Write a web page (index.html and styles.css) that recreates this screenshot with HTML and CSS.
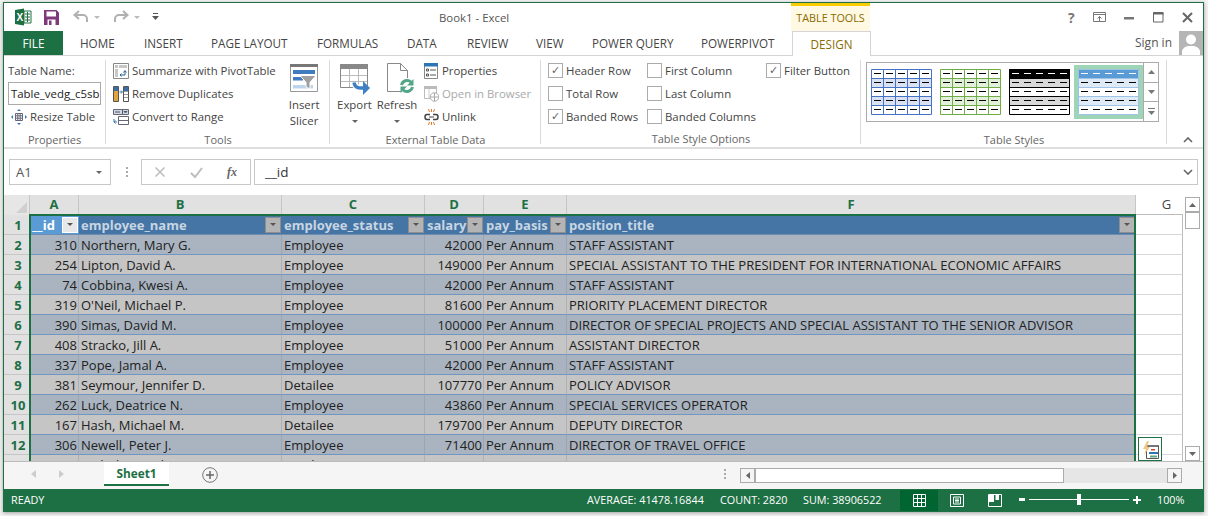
FILE: index.html
```html
<!DOCTYPE html>
<html>
<head>
<meta charset="utf-8">
<title>Book1 - Excel</title>
<link rel="stylesheet" href="styles.css">
</head>
<body>
<div class="window">
  <div class="titlebar">
    <div class="qat">
      <svg class="xl" width="18" height="18" viewBox="0 0 18 18"><path d="M10 3h7v12h-7z" fill="#fff" stroke="#1d7044"/><path d="M11 6h5M11 9h5M11 12h5M13.500 4v10" stroke="#1d7044"/><path d="M1 2l9-1.500v17L1 16z" fill="#1d7044"/><text x="2.600" y="13" class="xl-x">X</text></svg>
      <svg class="save" width="15" height="15" viewBox="0 0 15 15"><path d="M0 0h12.500L15 2.500V15H0z" fill="#80397b"/><path d="M2.500 1.500h9.500v5h-9.500z" fill="#fff"/><path d="M3.500 9.500h8V15h-8z" fill="#fff"/><path d="M5 10.500h2.500V15H5z" fill="#80397b"/></svg>
      <svg class="undo" width="16" height="14" viewBox="0 0 16 14"><path d="M6 1L1.500 5 6 9M2 5h8a4 4 0 0 1 4 4v3" fill="none" stroke="#b0b0b0" stroke-width="2"/></svg>
      <i class="mini-caret"></i>
      <svg class="redo" width="16" height="14" viewBox="0 0 16 14"><path d="M10 1l4.500 4L10 9M14 5H6a4 4 0 0 0-4 4v3" fill="none" stroke="#b0b0b0" stroke-width="2"/></svg>
      <i class="mini-caret"></i>
      <svg class="custom" width="7" height="8" viewBox="0 0 7 8"><path d="M1 .500h5" stroke="#555"/><path d="M0 3h7L3.500 7z" fill="#555"/></svg>
    </div>
    <div class="doc-title">Book1 - Excel</div>
    <div class="tool-head">TABLE TOOLS</div>
    <div class="win-controls">
      <span class="help">?</span>
      <svg class="c-restore" width="13" height="10" viewBox="0 0 13 10"><path d="M.5.500h12v9H.5z" fill="none" stroke="#777"/><path d="M1 2.500h11" stroke="#777"/><path d="M6.500 9V4.500M4.500 6.500l2-2 2 2" fill="none" stroke="#777"/></svg>
      <svg class="c-min" width="10" height="3" viewBox="0 0 10 3"><path d="M0 0h10v2.500H0z" fill="#777"/></svg>
      <svg class="c-max" width="11" height="11" viewBox="0 0 11 11"><path d="M.5.500h9.500v9.500H.5z" fill="none" stroke="#666"/><path d="M0 1.500h10.500" stroke="#666" stroke-width="2"/></svg>
      <svg class="c-close" width="11" height="11" viewBox="0 0 11 11"><path d="M1 1l9 9M10 1l-9 9" stroke="#666" stroke-width="2"/></svg>
    </div>
  </div>

  <div class="tabs">
    <div class="tab file">FILE</div>
    <div class="tab t-home">HOME</div>
    <div class="tab t-insert">INSERT</div>
    <div class="tab t-layout">PAGE LAYOUT</div>
    <div class="tab t-formulas">FORMULAS</div>
    <div class="tab t-data">DATA</div>
    <div class="tab t-review">REVIEW</div>
    <div class="tab t-view">VIEW</div>
    <div class="tab t-pq">POWER QUERY</div>
    <div class="tab t-pp">POWERPIVOT</div>
    <div class="tab design">DESIGN</div>
    <div class="signin">
      <span>Sign in</span>
      <svg width="24" height="24" viewBox="0 0 24 24"><path d="M0 0h24v24H0z" fill="#b5b5b5"/><circle cx="12" cy="8.500" r="5" fill="#fff"/><path d="M3 24v-4q1-4 6-5h6q5 1 6 5v4z" fill="#fff"/></svg>
    </div>
  </div>

  <div class="ribbon">
    <section class="group g-props">
      <div class="g-body">
        <div class="rl">Table Name:</div>
        <div class="name-input">Table_vedg_c5sb</div>
        <div class="rl resize">
          <svg width="16" height="16" viewBox="0 0 16 16"><path d="M4.500 4.500h7v7h-7zM4.500 6.800h7M4.500 9.200h7M6.800 4.500v7M9.200 4.500v7" fill="none" stroke="#667"/><path d="M8 0l2 2H6zM8 16l-2-2h4zM0 8l2-2v4zM16 8l-2 2V6z" fill="#3a76b8"/></svg>
          <span>Resize Table</span>
        </div>
      </div>
      <div class="g-label">Properties</div>
    </section>

    <section class="group g-tools">
      <div class="g-body tools-body">
        <div class="cmd-list">
          <div class="cmd">
            <svg width="16" height="16" viewBox="0 0 16 16"><path d="M.5.500h15v15H.5z" fill="#fff" stroke="#888"/><path d="M2 2h3v3H2zM6 2h8v3H6zM2 6h3v8H2z" fill="#c8c8c8"/><path d="M7 12h5V8M10.500 9.500l1.500-2 1.500 2M8.500 10.500L7 12l1.500 1.500" fill="none" stroke="#2a5f9e"/></svg>
            <span>Summarize with PivotTable</span>
          </div>
          <div class="cmd">
            <svg width="16" height="16" viewBox="0 0 16 16"><path d="M.5.500h5v15h-5zM10.500.500h5v15h-5z" fill="#fff" stroke="#555"/><path d="M1 1h4v4H1zM11 1h4v4h-4z" fill="#3a6ea5"/><path d="M1 5h4v5H1zM1 10h4v5H1z" fill="#e0a63c"/><path d="M11 5.500h4M11 8.500h4M11 11.500h4" stroke="#999"/><path d="M6.500 6H9M8 4.500L9.500 6 8 7.500" fill="none" stroke="#3a76b8"/></svg>
            <span>Remove Duplicates</span>
          </div>
          <div class="cmd">
            <svg width="16" height="16" viewBox="0 0 16 16"><path d="M.5.500h15v5H.5z" fill="#cfd9e6" stroke="#667"/><path d="M9.500 1v4M11 2.500h3L12.500 4zM2 3h5" stroke="#556" fill="none"/><path d="M5.500 7.500h10v8h-10z" fill="#fff" stroke="#667"/><path d="M6 11.500h9" stroke="#667"/><path d="M1 10v3h3M2.500 11.500L1 13l1.500 1.500" fill="none" stroke="#3a76b8"/></svg>
            <span>Convert to Range</span>
          </div>
        </div>
        <div class="big slicer">
          <svg width="28" height="28" viewBox="0 0 28 28"><path d="M.5.500h27v27H.5z" fill="#fff" stroke="#999"/><path d="M0 0h28v3H0z" fill="#777"/><path d="M3 6h22v4H3z" fill="#3f7cbf"/><path d="M3 13h10v3.500H3z" fill="#3f7cbf"/><path d="M3 21h20v3.500H3z" fill="#bcd5ec"/><path d="M10 11.500h16l-6 7V25l-4-2v-4.500z" fill="#a0a0a0" stroke="#fff"/></svg>
          <span>Insert</span>
          <span>Slicer</span>
        </div>
      </div>
      <div class="g-label">Tools</div>
    </section>

    <section class="group g-ext">
      <div class="g-body ext-body">
        <div class="big export">
          <svg width="30" height="31" viewBox="0 0 30 31"><path d="M.5.500h27v23H.5z" fill="#fff" stroke="#888"/><path d="M0 0h28v5H0z" fill="#888"/><path d="M1 11.500h26M1 17.500h26M9.500 5v18M18.500 5v18" stroke="#bbb"/><path d="M14 18.500q1 5.500 6 5.500h4" fill="none" stroke="#fff" stroke-width="6"/><path d="M14 18.500q1 5.500 6 5.500h4" fill="none" stroke="#3f80c4" stroke-width="3.500"/><path d="M23 17l7 7-7 7z" fill="#3f80c4"/></svg>
          <span>Export</span>
          <i class="caret"></i>
        </div>
        <div class="big refresh">
          <svg width="28" height="31" viewBox="0 0 28 31"><path d="M.5.500h13l7 7v21H.5z" fill="#fff" stroke="#888"/><path d="M13.500.500v7h7" fill="none" stroke="#888"/><circle cx="20" cy="23" r="8" fill="#fff"/><path d="M14.500 22a5.800 5.800 0 0 1 9.500-3" fill="none" stroke="#53a588" stroke-width="3"/><path d="M26.500 16v6.500H20z" fill="#53a588"/><path d="M25.500 24a5.800 5.800 0 0 1-9.500 3" fill="none" stroke="#53a588" stroke-width="3"/><path d="M13.500 30v-6.500H20z" fill="#53a588"/></svg>
          <span>Refresh</span>
          <i class="caret"></i>
        </div>
        <div class="cmd-list">
          <div class="cmd">
            <svg width="15" height="16" viewBox="0 0 15 16"><path d="M.5.500h13v15H.5z" fill="#fff" stroke="#888"/><path d="M0 0h14v3.500H0z" fill="#2e75b6"/><path d="M2.500 6h2v2h-2zM2.500 11h2v2h-2z" fill="none" stroke="#555"/><path d="M6 7h6M6 12h6" stroke="#555"/></svg>
            <span>Properties</span>
          </div>
          <div class="cmd off">
            <svg width="15" height="16" viewBox="0 0 15 16"><path d="M.5.500h12v12H.5z" fill="#fff" stroke="#bbb"/><path d="M0 0h13v3H0z" fill="#bbb"/><path d="M5 3v9" stroke="#ccc"/><circle cx="10.500" cy="11" r="4.300" fill="#fff" stroke="#aaa"/><path d="M6.500 11h8M10.500 7v8" stroke="#aaa"/></svg>
            <span>Open in Browser</span>
          </div>
          <div class="cmd">
            <svg width="15" height="16" viewBox="0 0 15 16"><path d="M6 5.500H3q-2 0-2 2.500t2 2.500h3M9 5.500h3q2 0 2 2.500t-2 2.500H9" fill="none" stroke="#444" stroke-width="1.500"/><path d="M5 8h5" stroke="#444"/><path d="M4.500 0l1 3M7.500 0v3M10.500 0l-1 3M4.500 16l1-3M7.500 16v-3M10.500 16l-1-3" stroke="#e8792b"/></svg>
            <span>Unlink</span>
          </div>
        </div>
      </div>
      <div class="g-label">External Table Data</div>
    </section>

    <section class="group g-opts">
      <div class="g-body opts-body">
        <label class="chk on">Header Row</label>
        <label class="chk">First Column</label>
        <label class="chk on">Filter Button</label>
        <label class="chk">Total Row</label>
        <label class="chk">Last Column</label>
        <span></span>
        <label class="chk on">Banded Rows</label>
        <label class="chk">Banded Columns</label>
        <span></span>
      </div>
      <div class="g-label">Table Style Options</div>
    </section>

    <section class="group g-styles">
      <div class="g-body styles-body">
        <div class="gallery">
          <svg class="swatch" width="61" height="46" viewBox="0 0 61 46"><path d="M0 0h61v46H0z" fill="#fff"/><path d="M0 9h61v9H0zM0 27h61v9H0z" fill="#d9e1f2"/><path d="M.5.500h60v45H.5zM.5 9.500h60M.5 18.500h60M.5 27.500h60M.5 36.500h60M12.500 0v46M24.500 0v46M36.500 0v46M48.500 0v46" fill="none" stroke="#4472c4"/><path d="M3 4.500h56M3 13.500h56M3 22.500h56M3 31.500h56M3 40.500h56" stroke="#000" stroke-dasharray="7 5"/></svg>
          <svg class="swatch" width="61" height="46" viewBox="0 0 61 46"><path d="M0 0h61v46H0z" fill="#fff"/><path d="M0 9h61v9H0zM0 27h61v9H0z" fill="#e2efda"/><path d="M.5.500h60v45H.5zM.5 9.500h60M.5 18.500h60M.5 27.500h60M.5 36.500h60M12.500 0v46M24.500 0v46M36.500 0v46M48.500 0v46" fill="none" stroke="#70ad47"/><path d="M3 4.500h56M3 13.500h56M3 22.500h56M3 31.500h56M3 40.500h56" stroke="#000" stroke-dasharray="7 5"/></svg>
          <svg class="swatch" width="61" height="46" viewBox="0 0 61 46"><path d="M0 0h61v46H0z" fill="#fff"/><path d="M0 9h61v9H0zM0 27h61v9H0z" fill="#d9d9d9"/><path d="M0 0h61v9H0z"/><path d="M.5.500h60v45H.5zM.5 9.500h60M.5 18.500h60M.5 27.500h60M.5 36.500h60" fill="none" stroke="#000"/><path d="M3 4.500h56" stroke="#fff" stroke-dasharray="7 5"/><path d="M3 13.500h56M3 22.500h56M3 31.500h56M3 40.500h56" stroke="#000" stroke-dasharray="7 5"/></svg>
          <div class="swatch-hl"><svg class="swatch" width="61" height="46" viewBox="0 0 61 46"><path d="M0 0h61v46H0z" fill="#fff"/><path d="M0 9h61v9H0zM0 27h61v9H0z" fill="#deeaf6"/><path d="M0 0h61v9H0z" fill="#5b9bd5"/><path d="M.5.500h60v45H.5zM.5 9.500h60M.5 18.500h60M.5 27.500h60M.5 36.500h60" fill="none" stroke="#9dc3e6"/><path d="M3 4.500h56" stroke="#fff" stroke-dasharray="7 5"/><path d="M3 13.500h56M3 22.500h56M3 31.500h56M3 40.500h56" stroke="#000" stroke-dasharray="7 5"/></svg></div>
        </div>
        <div class="gal-scroll">
          <div><svg width="7" height="4" viewBox="0 0 7 4"><path d="M3.500 0L7 4H0z" fill="#777"/></svg></div>
          <div><svg width="7" height="4" viewBox="0 0 7 4"><path d="M0 0h7L3.500 4z" fill="#777"/></svg></div>
          <div><svg width="7" height="7" viewBox="0 0 7 7"><path d="M0 .500h7" stroke="#777"/><path d="M0 3h7L3.500 7z" fill="#777"/></svg></div>
        </div>
      </div>
      <div class="g-label">Table Styles</div>
    </section>
    <svg class="collapse" width="10" height="6" viewBox="0 0 10 6"><path d="M1 5l4-4 4 4" fill="none" stroke="#666" stroke-width="1.600"/></svg>
  </div>

  <div class="formula-bar">
    <div class="namebox"><span>A1</span><i class="fb-caret"></i></div>
    <div class="fb-grip"></div>
    <div class="fb-buttons">
      <svg width="10" height="10" viewBox="0 0 10 10"><path d="M.5.500l9 9M9.500.500l-9 9" stroke="#bdbdbd" stroke-width="1.500"/></svg>
      <svg width="13" height="11" viewBox="0 0 13 11"><path d="M1 6l4 4 7-9" fill="none" stroke="#bdbdbd" stroke-width="2"/></svg>
      <span class="fx">fx</span>
    </div>
    <div class="fb-input"><span>__id</span><svg width="10" height="6" viewBox="0 0 10 6"><path d="M1 1l4 4 4-4" fill="none" stroke="#666" stroke-width="1.600"/></svg></div>
  </div>

  <div class="sheet-area">
    <div class="grid-wrap">
      <div class="grid">
        <div class="corner"></div><div class="ch sel">A</div><div class="ch sel">B</div><div class="ch sel">C</div><div class="ch sel">D</div><div class="ch sel">E</div><div class="ch sel">F</div><div class="ch g">G</div>

        <div class="rh">1</div><div class="th active"><b>__id</b><i class="flt lit"></i></div><div class="th"><b>employee_name</b><i class="flt"></i></div><div class="th"><b>employee_status</b><i class="flt"></i></div><div class="th"><b>salary</b><i class="flt"></i></div><div class="th"><b>pay_basis</b><i class="flt"></i></div><div class="th"><b>position_title</b><i class="flt"></i></div><div class="blank"></div>

        <div class="rh">2</div><div class="td a num">310</div><div class="td a">Northern, Mary G.</div><div class="td a">Employee</div><div class="td a num">42000</div><div class="td a">Per Annum</div><div class="td a">STAFF ASSISTANT</div><div class="blank"></div>
        <div class="rh">3</div><div class="td b num">254</div><div class="td b">Lipton, David A.</div><div class="td b">Employee</div><div class="td b num">149000</div><div class="td b">Per Annum</div><div class="td b">SPECIAL ASSISTANT TO THE PRESIDENT FOR INTERNATIONAL ECONOMIC AFFAIRS</div><div class="blank"></div>
        <div class="rh">4</div><div class="td a num">74</div><div class="td a">Cobbina, Kwesi A.</div><div class="td a">Employee</div><div class="td a num">42000</div><div class="td a">Per Annum</div><div class="td a">STAFF ASSISTANT</div><div class="blank"></div>
        <div class="rh">5</div><div class="td b num">319</div><div class="td b">O'Neil, Michael P.</div><div class="td b">Employee</div><div class="td b num">81600</div><div class="td b">Per Annum</div><div class="td b">PRIORITY PLACEMENT DIRECTOR</div><div class="blank"></div>
        <div class="rh">6</div><div class="td a num">390</div><div class="td a">Simas, David M.</div><div class="td a">Employee</div><div class="td a num">100000</div><div class="td a">Per Annum</div><div class="td a">DIRECTOR OF SPECIAL PROJECTS AND SPECIAL ASSISTANT TO THE SENIOR ADVISOR</div><div class="blank"></div>
        <div class="rh">7</div><div class="td b num">408</div><div class="td b">Stracko, Jill A.</div><div class="td b">Employee</div><div class="td b num">51000</div><div class="td b">Per Annum</div><div class="td b">ASSISTANT DIRECTOR</div><div class="blank"></div>
        <div class="rh">8</div><div class="td a num">337</div><div class="td a">Pope, Jamal A.</div><div class="td a">Employee</div><div class="td a num">42000</div><div class="td a">Per Annum</div><div class="td a">STAFF ASSISTANT</div><div class="blank"></div>
        <div class="rh">9</div><div class="td b num">381</div><div class="td b">Seymour, Jennifer D.</div><div class="td b">Detailee</div><div class="td b num">107770</div><div class="td b">Per Annum</div><div class="td b">POLICY ADVISOR</div><div class="blank"></div>
        <div class="rh">10</div><div class="td a num">262</div><div class="td a">Luck, Deatrice N.</div><div class="td a">Employee</div><div class="td a num">43860</div><div class="td a">Per Annum</div><div class="td a">SPECIAL SERVICES OPERATOR</div><div class="blank"></div>
        <div class="rh">11</div><div class="td b num">167</div><div class="td b">Hash, Michael M.</div><div class="td b">Detailee</div><div class="td b num">179700</div><div class="td b">Per Annum</div><div class="td b">DEPUTY DIRECTOR</div><div class="blank"></div>
        <div class="rh">12</div><div class="td a num">306</div><div class="td a">Newell, Peter J.</div><div class="td a">Employee</div><div class="td a num">71400</div><div class="td a">Per Annum</div><div class="td a">DIRECTOR OF TRAVEL OFFICE</div><div class="blank"></div>
        <div class="rh">13</div><div class="td b num">255</div><div class="td b">Nichols, Carol</div><div class="td b">Employee</div><div class="td b num">62000</div><div class="td b">Per Annum</div><div class="td b">STAFF ASSISTANT</div><div class="blank"></div>
      </div>
      <div class="selection"></div>
      <div class="quick">
        <svg width="18" height="18" viewBox="0 0 18 18"><path d="M4.500 4.500h12v13h-12z" fill="#fff" stroke="#555"/><path d="M5 4h11v2H5z" fill="#777"/><path d="M9 8h4v1.500H9z" fill="#d9432f"/><path d="M7 11h9v2H7z" fill="#2e75b6"/><path d="M8 14.500h7v2H8z" fill="#5fa58a"/><path d="M5 0L1 8h3l-2 6 6-8H5l2-6z" fill="#f0c987"/></svg>
      </div>
    </div>
    <div class="vscroll">
      <div class="sb-btn"><svg width="7" height="4" viewBox="0 0 7 4"><path d="M3.500 0L7 4H0z" fill="#666"/></svg></div>
      <div class="sb-thumb"></div>
      <div class="sb-track"></div>
      <div class="sb-btn"><svg width="7" height="4" viewBox="0 0 7 4"><path d="M0 0h7L3.500 4z" fill="#666"/></svg></div>
    </div>
  </div>

  <div class="sheet-tabs">
    <svg class="nav-l" width="5" height="8" viewBox="0 0 5 8"><path d="M5 0v8L0 4z" fill="#ccc"/></svg>
    <svg class="nav-r" width="5" height="8" viewBox="0 0 5 8"><path d="M0 0v8l5-4z" fill="#ccc"/></svg>
    <div class="sheet-tab">Sheet1</div>
    <svg class="add" width="16" height="16" viewBox="0 0 16 16"><circle cx="8" cy="8" r="7.300" fill="none" stroke="#777"/><path d="M8 4v8M4 8h8" stroke="#666" stroke-width="1.500"/></svg>
    <div class="tab-grip"></div>
    <div class="hscroll">
      <div class="hs-btn"><svg width="4" height="7" viewBox="0 0 4 7"><path d="M4 0v7L0 3.500z" fill="#666"/></svg></div>
      <div class="hs-thumb"></div>
      <div class="hs-track"></div>
      <div class="hs-btn"><svg width="4" height="7" viewBox="0 0 4 7"><path d="M0 0v7l4-3.500z" fill="#666"/></svg></div>
    </div>
  </div>

  <div class="status">
    <span class="ready">READY</span>
    <span class="stat s1">AVERAGE: 41478.16844</span>
    <span class="stat s2">COUNT: 2820</span>
    <span class="stat s3">SUM: 38906522</span>
    <div class="view-btn active"><svg width="13" height="13" viewBox="0 0 13 13"><path d="M.5.500h12v12H.5zM4.500.500v12M8.500.500v12M.5 4.500h12M.5 8.500h12" fill="none" stroke="#fff"/></svg></div>
    <div class="view-btn"><svg width="14" height="13" viewBox="0 0 14 13"><path d="M.5.500h13v12H.5zM3.500 3h7v7h-7zM5 5h4M5 6.500h4M5 8h4" fill="none" stroke="#fff"/></svg></div>
    <div class="view-btn"><svg width="14" height="13" viewBox="0 0 14 13"><path d="M.5.500h13v12H.5z" fill="none" stroke="#fff"/><path d="M1 1h5v7H1zM7.500 1H11v5H7.500z" fill="#fff"/></svg></div>
    <div class="zoom">
      <svg width="6" height="3" viewBox="0 0 6 3"><path d="M0 0h6v3H0z" fill="#fff"/></svg>
      <div class="slider"><i></i></div>
      <svg width="8" height="8" viewBox="0 0 8 8"><path d="M3 0h2v8H3zM0 3h8v2H0z" fill="#fff"/></svg>
    </div>
    <span class="pct">100%</span>
  </div>
</div>
</body>
</html>
```
FILE: styles.css
```css
* { box-sizing: border-box; }
html, body { margin: 0; padding: 0; height: 100%; background: #f3f3f3; overflow: hidden; }
body { padding: 2px 4px 4px 3px; font-family: "Open Sans", "Noto Sans", sans-serif; font-size: 11.4px; color: #444; }
.window { width: 1201px; height: 510px; background: #fff; border: 1px solid #1d7044; border-bottom: 0; display: flex; flex-direction: column; box-shadow: 0 1px 4px rgba(0,0,0,.35); }

.titlebar { height: 28px; display: flex; align-items: center; flex: none; }
.qat { display: flex; align-items: center; width: 425px; padding-left: 10px; }
.xl-x { font: bold 10px "Liberation Sans", sans-serif; fill: #fff; }
.save { margin-left: 12px; }
.undo { margin-left: 14px; }
.redo { margin-left: 13px; }
.mini-caret { width: 0; height: 0; border: 3px solid transparent; border-top-color: #bbb; border-bottom: 0; margin-left: 5px; }
.custom { margin-left: 12px; }
.doc-title { width: 362px; padding-left: 10px; font-size: 11.4px; color: #555; }
.tool-head { width: 79px; height: 28px; background: #fff9e3; border-top: 3px solid #f8cc00; color: #8b6a00; font-size: 10.8px; text-align: center; line-height: 24px; }
.win-controls { flex: 1; display: flex; align-items: center; }
.help { font: bold 14px "Open Sans", sans-serif; color: #777; margin-left: 198px; }
.c-restore { margin-left: 18px; }
.c-min { margin-left: 18px; margin-top: 3px; }
.c-max { margin-left: 19px; }
.c-close { margin-left: 18px; }

.tabs { height: 25px; display: flex; align-items: stretch; border-bottom: 1px solid #d4d4d4; flex: none; }
.tab { font-size: 11.7px; color: #444; line-height: 24px; white-space: nowrap; }
.file { width: 59px; background: #1d7044; color: #fff; text-align: center; }
.t-home { margin-left: 17px; width: 64px; }
.t-insert { width: 67px; }
.t-layout { width: 106px; }
.t-formulas { width: 90px; }
.t-data { width: 60px; }
.t-review { width: 69px; }
.t-view { width: 56px; }
.t-pq { width: 109px; }
.t-pp { width: 91px; }
.design { width: 79px; height: 25px; border: 1px solid #d4d4d4; border-bottom: 0; background: #fff; text-align: center; color: #8b6a00; }
.signin { flex: 1; display: flex; justify-content: flex-end; align-items: flex-start; gap: 7px; line-height: 23px; font-size: 12px; color: #555; }
.signin svg { display: block; }

.ribbon { height: 93px; display: flex; position: relative; flex: none; border-bottom: 2px solid #dedede; padding-top: 4px; }
.group { height: 88px; display: flex; flex-direction: column; flex: none; background: linear-gradient(#dadada, #dadada) right top / 1px 84px no-repeat; }
.g-body { height: 72px; flex: none; }
.g-label { height: 16px; line-height: 16px; text-align: center; font-size: 11px; color: #666; }
.g-props { width: 102px; padding-left: 4px; }
.g-props .g-label { padding-right: 5px; }
.rl { height: 22px; line-height: 22px; color: #444; }
.name-input { width: 93px; height: 23px; border: 1px solid #ababab; line-height: 21px; padding-left: 2px; font-size: 11.4px; color: #222; white-space: nowrap; overflow: hidden; }
.resize { display: flex; align-items: center; gap: 3px; height: 23px; padding-left: 3px; }
.g-tools { width: 224px; }
.tools-body { display: flex; padding-left: 7px; }
.cmd-list { display: flex; flex-direction: column; margin-top: -1px; }
.cmd { height: 23px; display: flex; align-items: center; gap: 3px; white-space: nowrap; }
.cmd svg { flex: none; }
.off { color: #a9a9a9; }
.big { display: flex; flex-direction: column; align-items: center; line-height: 16px; }
.slicer { margin-left: 13px; margin-top: 4px; }
.slicer svg { margin-bottom: 5px; }
.g-ext { width: 211px; }
.ext-body { display: flex; padding-left: 7px; }
.export { width: 35px; margin-top: 4px; }
.export svg { margin-bottom: 2px; }
.refresh { width: 44px; margin-left: 3px; margin-top: 3px; }
.refresh svg { margin: 0 0 3px 8px; }
.ext-body .cmd-list { margin-left: 5px; }
.caret { width: 0; height: 0; border: 3px solid transparent; border-top-color: #666; border-bottom: 0; margin-top: 7px; }
.g-opts { width: 320px; }
.opts-body { display: grid; grid-template-columns: 99px 119px 1fr; grid-template-rows: repeat(3, 23px); align-content: start; padding-left: 7px; margin-top: -1px; }
.chk { display: flex; align-items: center; gap: 3px; white-space: nowrap; }
.chk::before { content: ""; width: 13px; height: 13px; border: 1px solid #ababab; background: #fff; flex: none; font-size: 11px; line-height: 11px; text-align: center; color: #666; }
.chk.on::before { content: "\2713"; }
.g-styles { width: 306px; }
.styles-body { display: flex; padding: 2px 0 0 5px; }
.gallery { width: 278px; height: 60px; border: 1px solid #ababab; display: flex; padding: 6px 0 0 4px; gap: 8px; }
.gal-scroll { width: 15px; height: 60px; border: 1px solid #ababab; border-left: 0; display: flex; flex-direction: column; }
.gal-scroll div { flex: 1; display: flex; align-items: center; justify-content: center; }
.gal-scroll div + div { border-top: 1px solid #ababab; }
.swatch { display: block; flex: none; }
.swatch-hl { width: 69px; height: 54px; margin: -4px 0 0 -4px; background: #9fd5b7; padding: 4px; flex: none; }
.collapse { position: absolute; right: 10px; top: 81px; }

.formula-bar { height: 46px; display: flex; align-items: flex-start; padding: 10px 5px 0 5px; flex: none; }
.namebox { width: 102px; height: 26px; border: 1px solid #c8c8c8; display: flex; align-items: center; justify-content: space-between; padding: 0 8px 0 6px; font-size: 13px; color: #555; }
.fb-caret { width: 0; height: 0; border: 3.5px solid transparent; border-top-color: #666; border-bottom: 0; }
.fb-grip { width: 30px; height: 26px; position: relative; }
.fb-grip::before { content: ""; position: absolute; left: 15px; top: 8px; width: 2px; height: 11px; background: repeating-linear-gradient(#aaa 0 2px, transparent 2px 4px); }
.fb-buttons { width: 110px; height: 26px; border: 1px solid #c8c8c8; display: flex; align-items: center; padding-left: 13px; gap: 24.5px; }
.fx { font: italic bold 12px "Liberation Serif", serif; color: #666; }
.fb-input { width: 944px; height: 26px; margin-left: 3px; border: 1px solid #c8c8c8; display: flex; align-items: center; justify-content: space-between; padding: 0 4px 0 10px; font-size: 13.5px; color: #333; }

.sheet-area { height: 266px; display: flex; flex: none; overflow: hidden; }
.grid-wrap { width: 1180px; position: relative; overflow: hidden; height: 266px; }
.grid { display: grid; grid-template-columns: 26px 49px 203px 143px 59px 83px 569px 47px; grid-auto-rows: 20px; font-size: 13px; }
.corner { background: #e6e6e6; border-right: 1px solid #c6c6c6; position: relative; }
.corner::after { content: ""; position: absolute; right: 2px; bottom: 2px; border-style: solid; border-width: 0 0 11px 11px; border-color: transparent transparent #d0d0d0 transparent; }
.ch { background: #e1e1e1; border-right: 1px solid #c6c6c6; border-bottom: 1px solid #c6c6c6; text-align: center; line-height: 19px; font-weight: 700; color: #1d7044; font-size: 13px; }
.ch.g { background: #fff; border: 0; font-weight: 400; color: #444; border-bottom: 1px solid #bbb; padding-left: 14px; }
.rh { background: #e1e1e1; border-right: 1px solid #c6c6c6; border-bottom: 1px solid #c6c6c6; text-align: center; line-height: 20px; font-weight: 700; color: #1d7044; padding-left: 3px; }
.th { background: #4475a5; color: #c9d5e2; position: relative; line-height: 21px; padding-left: 2px; white-space: nowrap; overflow: hidden; border-bottom: 1px solid #6e8db0; }
.th b { font-weight: 700; }
.th.active { background: #5b9bd5; color: #fff; }
.flt { position: absolute; right: 1px; top: 2px; width: 16px; height: 16px; background: #b4b4b4; border: 1px solid #8e8e8e; }
.flt::after { content: ""; position: absolute; left: 3.5px; top: 5px; border: 3.5px solid transparent; border-top-color: #555; border-bottom: 0; }
.flt.lit { background: #e8e8e8; border-color: #fff; }
.td { white-space: nowrap; overflow: hidden; line-height: 21px; padding-left: 2px; color: #222; border-bottom: 1px solid #7296bf; border-right: 1px solid rgba(100,120,150,.25); }
.td.a { background: #a9b4c0; }
.td.b { background: #c5c5c5; }
.num { text-align: right; padding: 0 1px 0 0; }
.blank { border-bottom: 1px solid #d8d8d8; border-right: 1px solid #bbb; background: #fff; }
.selection { position: absolute; left: 25px; top: 19px; width: 1107px; height: 247px; border: 2px solid #1d7044; border-bottom: 0; pointer-events: none; }
.quick { position: absolute; left: 1134px; top: 242px; width: 24px; height: 24px; border: 1px solid #1d7044; background: #fff; padding: 3px; }
.quick svg { display: block; }
.vscroll { width: 19px; padding: 2px 0 0 1px; display: flex; flex-direction: column; }
.sb-btn { width: 15px; height: 15px; border: 1px solid #ababab; display: flex; align-items: center; justify-content: center; flex: none; }
.sb-thumb { width: 15px; height: 17px; border: 1px solid #ababab; flex: none; }
.sb-track { flex: 1; }

.sheet-tabs { height: 28px; background: #f5f5f5; border-top: 1px solid #bbb; display: flex; flex: none; padding-left: 27px; }
.nav-l { margin-top: 8px; }
.nav-r { margin: 8px 0 0 23px; }
.sheet-tab { margin-left: 40px; width: 65px; height: 24px; background: #fff; border-bottom: 2px solid #1d7044; text-align: center; font-weight: 700; color: #1d7044; font-size: 11.8px; line-height: 23px; }
.add { margin: 5px 0 0 33px; }
.tab-grip { width: 2px; height: 11px; margin: 7px 0 0 506px; background: repeating-linear-gradient(#aaa 0 2px, transparent 2px 4px); }
.hscroll { margin: 6px 0 0 14px; width: 442px; height: 15px; display: flex; background: #e6e6e6; }
.hs-btn { width: 15px; height: 15px; border: 1px solid #ababab; background: #f5f5f5; display: flex; align-items: center; justify-content: center; flex: none; }
.hs-thumb { width: 309px; background: #fff; border: 1px solid #ababab; }
.hs-track { flex: 1; }

.status { height: 23px; background: #1d7044; color: #fff; display: flex; align-items: center; font-size: 10.8px; flex: none; padding: 0 0 2px 7px; }
.ready { width: 576px; }
.stat { white-space: nowrap; }
.s1 { width: 133px; }
.s2 { width: 83px; }
.s3 { width: 97px; }
.view-btn { width: 38px; height: 21px; display: flex; align-items: center; justify-content: center; align-self: flex-end; margin-bottom: -1px; padding-bottom: 1px; }
.view-btn.active { background: #006531; }
.zoom { display: flex; align-items: center; margin-left: 5px; }
.slider { width: 100px; height: 1px; background: #fff; position: relative; margin: 0 4px; }
.slider i { position: absolute; left: 48px; top: -5px; width: 4px; height: 11px; background: #fff; }
.pct { margin-left: 16px; }
```
